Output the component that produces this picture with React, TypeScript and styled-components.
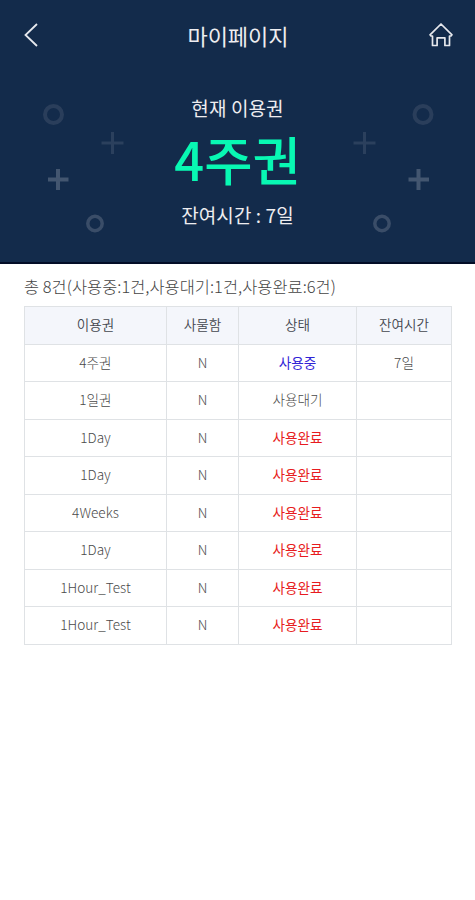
import React from "react";
import styled, { createGlobalStyle } from "styled-components";

const GlobalStyle = createGlobalStyle`
  * { box-sizing: border-box; }
  body {
    margin: 0;
    background: #fff;
    font-family: "Noto Sans CJK KR", "Noto Sans", sans-serif;
  }
`;

const Page = styled.main`
  width: 475px;
  height: 900px;
  overflow: hidden;
  background: #fff;
`;

const Hero = styled.section`
  position: relative;
  height: 264px;
  background: #132b4b;
  border-bottom: 2px solid #030d27;
  color: #eeedf0;
`;

const TopBar = styled.header`
  display: flex;
  align-items: center;
  justify-content: space-between;
  height: 70px;
  padding: 0 21px 0 22px;
`;

const IconButton = styled.button`
  display: flex;
  padding: 0;
  border: 0;
  background: none;
  color: #e6e8ed;
`;

const Title = styled.h1`
  margin: 0;
  padding-left: 2px;
  font-size: 22px;
  line-height: 32px;
  font-weight: 400;
`;

const Pass = styled.div`
  display: flex;
  flex-direction: column;
  align-items: center;
  padding-top: 24px;
`;

const PassLine = styled.p`
  margin: 0;
  font-size: 19px;
  line-height: 28px;
  font-weight: 400;
  letter-spacing: 0.1px;
`;

const PassName = styled.strong`
  height: 79px;
  font-size: 52.5px;
  line-height: 72px;
  font-weight: 500;
  color: #08f8b3;
`;

const Decoration = styled.svg`
  position: absolute;
  inset: 0;
  pointer-events: none;
`;

const Content = styled.section`
  padding: 9px 23px 0 24px;
`;

const Summary = styled.p`
  margin: 0;
  height: 33px;
  font-size: 16.4px;
  line-height: 27px;
  font-weight: 300;
  letter-spacing: 0.04px;
  color: #444;
  white-space: nowrap;
`;

const Table = styled.div`
  border-top: 1px solid #dfe2e5;
  border-left: 1px solid #dfe2e5;
`;

const Row = styled.div<{ $head?: boolean }>`
  display: grid;
  grid-template-columns: 142px 72px 118px 95px;
  height: 37.56px;
  background: ${(p) => (p.$head ? "#f4f6fb" : "#fff")};
  color: ${(p) => (p.$head ? "#43464e" : "#4a4a4a")};
  font-weight: ${(p) => (p.$head ? 350 : 300)};
`;

const Cell = styled.div<{ $color?: string; $strong?: boolean }>`
  display: flex;
  align-items: center;
  justify-content: center;
  padding-bottom: 2.5px;
  border-right: 1px solid #dfe2e5;
  border-bottom: 1px solid #dfe2e5;
  font-size: 13.6px;
  line-height: 20px;
  color: ${(p) => p.$color ?? "inherit"};
  font-weight: ${(p) => (p.$strong ? 400 : "inherit")};
`;

const statusColors: Record<string, string> = {
  사용중: "#3023d6",
  사용완료: "#e71b20",
};

const rows = [
  ["4주권", "N", "사용중", "7일"],
  ["1일권", "N", "사용대기", ""],
  ["1Day", "N", "사용완료", ""],
  ["1Day", "N", "사용완료", ""],
  ["4Weeks", "N", "사용완료", ""],
  ["1Day", "N", "사용완료", ""],
  ["1Hour_Test", "N", "사용완료", ""],
  ["1Hour_Test", "N", "사용완료", ""],
];

function Shapes() {
  return (
    <Decoration width="475" height="262" fill="none" aria-hidden="true">
      <g stroke="#2a3e5b" strokeWidth="4">
        <circle cx="53.5" cy="114.5" r="8.5" />
        <circle cx="423" cy="114.5" r="8.5" />
      </g>
      <g stroke="#2b405d" strokeWidth="3">
        <path d="M101.5 143h22M112.5 132v22" />
        <path d="M353.5 143h22M364.5 132v22" />
      </g>
      <g stroke="#435670" strokeWidth="4">
        <path d="M48 179.5h20.5M58 169v21" />
        <path d="M408.5 179.5H429M418.5 169v21" />
      </g>
      <g stroke="#3a4d68" strokeWidth="3.5">
        <circle cx="95" cy="223.5" r="7.2" />
        <circle cx="382" cy="223.5" r="7.2" />
      </g>
    </Decoration>
  );
}

export default function App() {
  return (
    <>
      <GlobalStyle />
      <Page>
        <Hero>
          <Shapes />
          <TopBar>
            <IconButton aria-label="뒤로">
              <svg width="24" height="26" fill="none" stroke="currentColor" strokeWidth="1.8">
                <path d="M15 2 3.5 13 15 24" />
              </svg>
            </IconButton>
            <Title>마이페이지</Title>
            <IconButton aria-label="홈">
              <svg width="26" height="26" fill="none" stroke="currentColor" strokeWidth="1.7" strokeLinejoin="round" strokeLinecap="round">
                <path d="M2 12.8 13 2l11 10.8-1 1.2h-1.5v9.5h-4.6v-7.7H9.1v7.7H4.5V14H3z" />
              </svg>
            </IconButton>
          </TopBar>
          <Pass>
            <PassLine>현재 이용권</PassLine>
            <PassName>4주권</PassName>
            <PassLine>잔여시간 : 7일</PassLine>
          </Pass>
        </Hero>
        <Content>
          <Summary>총 8건(사용중:1건,사용대기:1건,사용완료:6건)</Summary>
          <Table role="table">
            <Row $head role="row">
              {["이용권", "사물함", "상태", "잔여시간"].map((label) => (
                <Cell key={label} role="columnheader">{label}</Cell>
              ))}
            </Row>
            {rows.map((row, i) => (
              <Row key={i} role="row">
                {row.map((text, j) => (
                  <Cell key={j} role="cell" $color={statusColors[text]} $strong={text in statusColors}>
                    {text}
                  </Cell>
                ))}
              </Row>
            ))}
          </Table>
        </Content>
      </Page>
    </>
  );
}
